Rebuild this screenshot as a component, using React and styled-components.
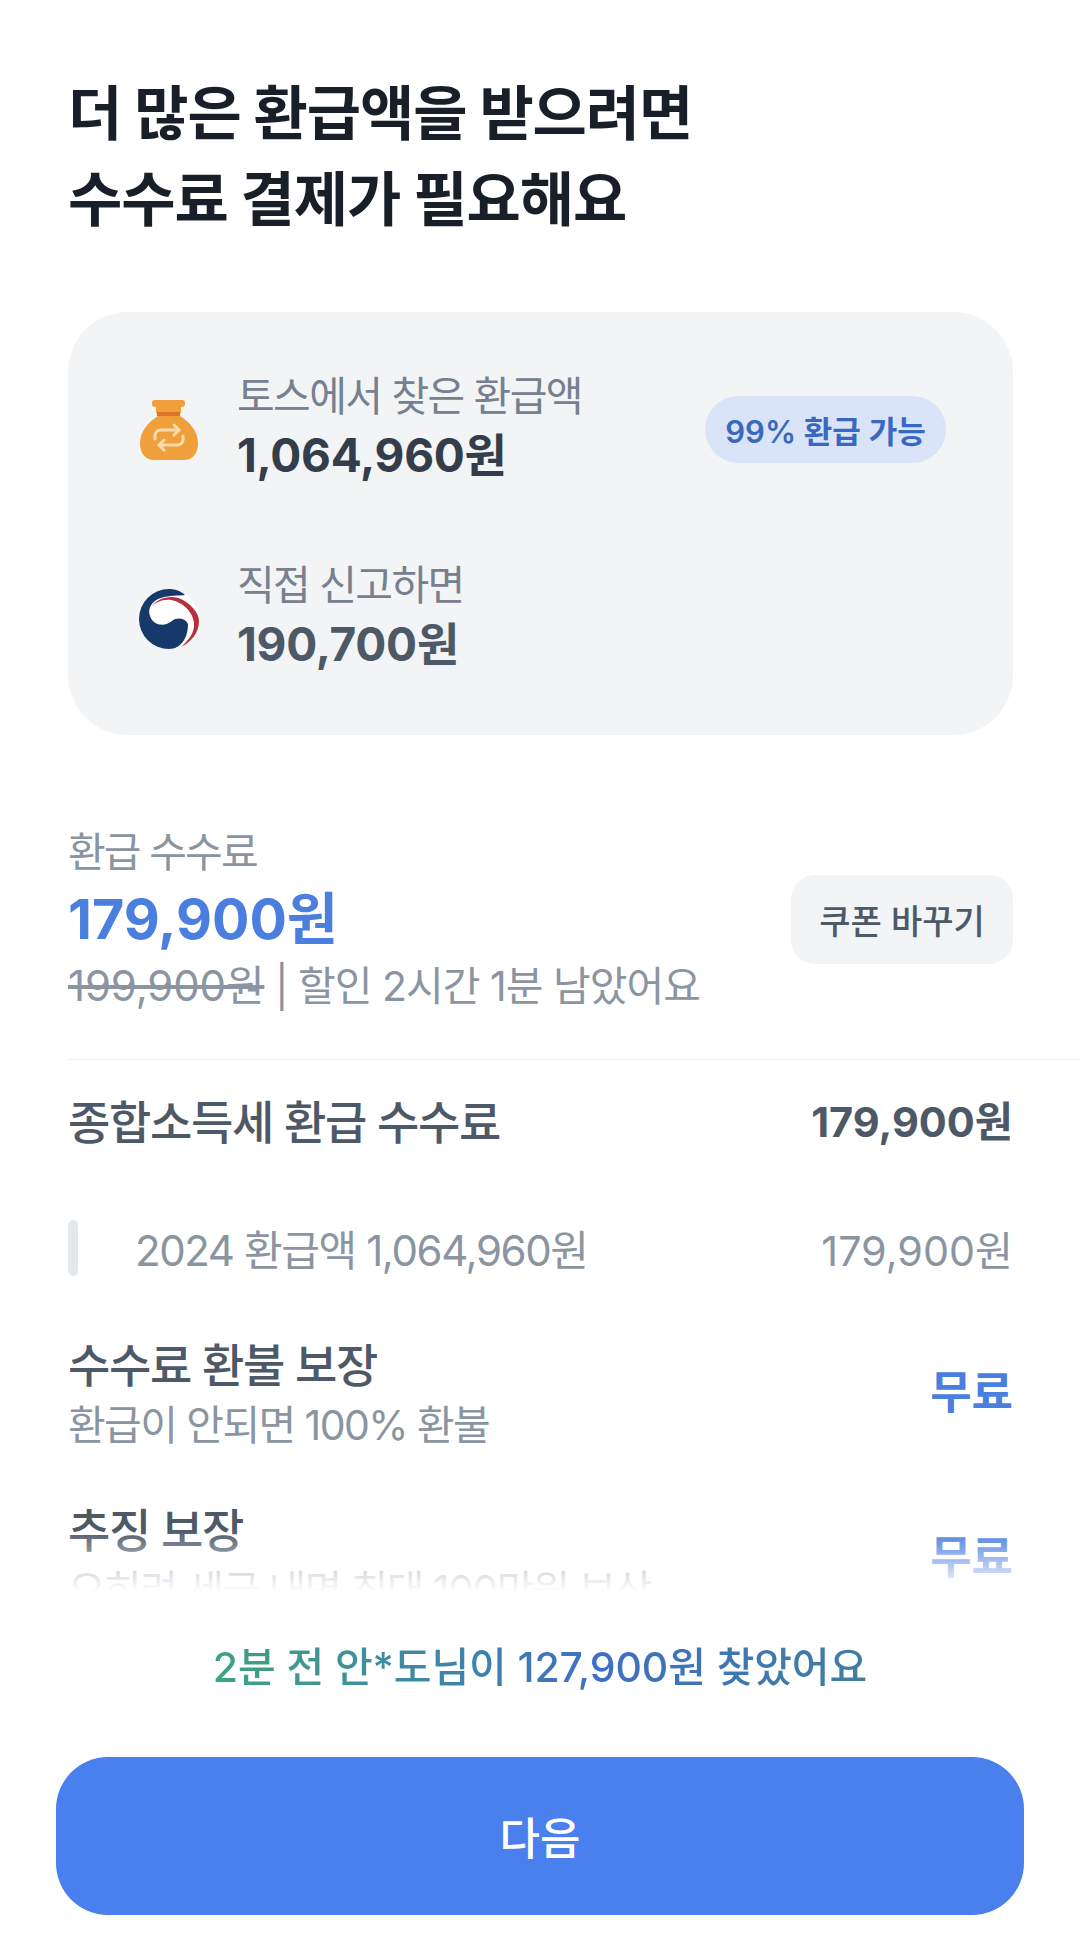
import React from "react";
import styled, { createGlobalStyle } from "styled-components";

const Global = createGlobalStyle`
  html, body { margin: 0; padding: 0; background: #fff; }
  * { box-sizing: border-box; }
  body { font-family: Inter, "Noto Sans CJK KR", sans-serif; }
`;
const Page = styled.div`
  width: 1080px; height: 1939px; display: flex; flex-direction: column; background: #fff; overflow: hidden;
`;
const Scroll = styled.main`
  position: relative; height: 1600px; overflow: hidden; padding: 71px 0 0 68px; flex: none;
`;
const Title = styled.h1`
  margin: 0 0 69px; font-size: 59px; line-height: 86px; font-weight: 700; color: #191f28; letter-spacing: -1.05px;
`;
const Card = styled.section`
  width: 945px; height: 423px; margin-bottom: 92px; background: #f2f4f6; border-radius: 60px;
  padding: 56px 67px 0 71px; display: flex; flex-direction: column; gap: 71px;
`;
const CardRow = styled.div`
  display: flex; align-items: center; height: 118px;
`;
const IconSlot = styled.div`
  width: 60px; height: 64px; margin: 6px 38px 0 0; flex: none; display: flex; align-items: center; justify-content: center;
`;
const CardText = styled.div`
  flex: 1; display: flex; flex-direction: column;
`;
const CardLabel = styled.div`
  font-size: 41px; line-height: 56px; color: #76808e; letter-spacing: -1.6px;
`;
const CardValue = styled.div`
  font-size: 46px; line-height: 62px; font-weight: 700; color: ${p => p.$c}; letter-spacing: -0.25px;
`;
const Badge = styled.div`
  height: 67px; width: 241px; margin-top: 5px; border-radius: 34px; background: #d9e4f8; color: #3a68bf;
  display: flex; align-items: center; justify-content: center; font-size: 31px; font-weight: 600;
`;
const Fee = styled.section`
  width: 945px; display: flex; align-items: center; justify-content: space-between; padding-bottom: 48px;
`;
const FeeText = styled.div`display: flex; flex-direction: column;`;
const FeeLabel = styled.div`font-size: 41px; line-height: 50px; color: #8b95a1; letter-spacing: -1.9px;`;
const FeePrice = styled.div`font-size: 55.5px; line-height: 84px; font-weight: 700; color: #4a7fe0;`;
const FeeNote = styled.div`font-size: 41px; line-height: 50px; color: #8b95a1; letter-spacing: -1px;`;
const Strike = styled.span`text-decoration: line-through; color: #8b95a1; font-size: 42px; letter-spacing: -0.15px;`;
const CouponBtn = styled.button`
  width: 222px; height: 89px; border: 0; border-radius: 24px; background: #f2f4f6; color: #4e5968;
  font: 500 34px Inter, "Noto Sans CJK KR", sans-serif;
`;
const Divider = styled.hr`margin: 0; border: 0; height: 1px; background: #eceef1;`;
const Row = styled.div`
  width: 945px; margin-top: ${p => p.$mt}px; display: flex; align-items: center; justify-content: space-between;
`;
const RowTitle = styled.div`font-size: 46px; line-height: 62px; font-weight: 500; color: #4e5968; letter-spacing: -1.3px;`;
const RowAmount = styled.div`font-size: 41.5px; line-height: 62px; font-weight: 700; color: #4e5968;`;
const SubBar = styled.span`width: 10px; height: 56px; border-radius: 5px; background: #e5e8eb; margin-right: 57px;`;
const SubLeft = styled.div`display: flex; align-items: center; font-size: 42px; color: #8b95a1; letter-spacing: -1.4px;`;
const SubAmount = styled.div`font-size: 41.3px; color: #8b95a1;`;
const RowText = styled.div`display: flex; flex-direction: column;`;
const RowDesc = styled.div`font-size: 41px; line-height: 58px; color: #8b95a1; letter-spacing: -1.6px;`;
const Free = styled.div`font-size: 45px; font-weight: 700; color: #4a7fe0; margin-bottom: 10px;`;
const Fade = styled.div`
  position: absolute; left: 0; right: 0; bottom: 0; height: 70px;
  background: linear-gradient(to bottom, rgba(255,255,255,0), #fff 88%);
`;
const Notice = styled.div`
  margin-top: 42px; text-align: center; font-size: 41px; line-height: 50px; font-weight: 500; letter-spacing: -0.1px;
`;
const Gradient = styled.span`
  background: linear-gradient(90deg, #3fa37f 0%, #3f6fc4 60%, #3f7f9f 100%);
  -webkit-background-clip: text; background-clip: text; color: transparent;
`;
const Cta = styled.button`
  margin: 65px 56px 0; height: 158px; border: 0; border-radius: 52px; background: #4a80ee; color: #fff;
  font: 500 44px Inter, "Noto Sans CJK KR", sans-serif;
`;

const Bag = () => (
  <svg width="58" height="60" viewBox="0 0 58 60">
    <rect x="12" y="0" width="33" height="7" rx="3" fill="#f0a03a"/>
    <path d="M16 7h25v6H16z" fill="#f0a03a"/>
    <path d="M17 12h23v4H17z" fill="#dd7526"/>
    <path d="M18 16h22c10 6 18 16 18 27 0 11-6 17-14 17H14C6 60 0 54 0 43c0-11 8-21 18-27z" fill="#f0a03a"/>
    <g fill="none" stroke="#f9dcae" strokeWidth="3" strokeLinecap="round" strokeLinejoin="round">
      <path d="M15 39v-4c0-3 3-5 6-5h18"/>
      <path d="M34 25l5 5-5 5"/>
      <path d="M43 36v4c0 3-3 5-6 5H19"/>
      <path d="M24 40l-5 5 5 5"/>
    </g>
  </svg>
);
const Taegeuk = () => (
  <svg width="60" height="62" viewBox="0 0 60 62">
    <circle cx="30" cy="31" r="30" fill="#fff"/>
    <path d="M30 1A30 30 0 0 0 30 61C42 61 49 50 49 36C46 30 38 29 33 33C26 39 14 38 11 28C8 20 14 12 22 10C30 7 40 8 46 7C42 3 36 1 30 1Z" fill="#17386b"/>
    <path d="M12 20C18 9 34 6 44 12C54 18 60 26 60 33C60 45 52 54 42 59C50 52 56 44 55 35C54 24 44 14 32 12C24 11 16 14 12 20Z" fill="#b4303f"/>
  </svg>
);

export default function App() {
  return (
    <Page>
      <Global />
      <Scroll>
        <Title>더 많은 환급액을 받으려면<br />수수료 결제가 필요해요</Title>
        <Card>
          <CardRow>
            <IconSlot><Bag /></IconSlot>
            <CardText>
              <CardLabel>토스에서 찾은 환급액</CardLabel>
              <CardValue $c="#333d4b">1,064,960원</CardValue>
            </CardText>
            <Badge>99% 환급 가능</Badge>
          </CardRow>
          <CardRow>
            <IconSlot><Taegeuk /></IconSlot>
            <CardText>
              <CardLabel>직접 신고하면</CardLabel>
              <CardValue $c="#4e5968">190,700원</CardValue>
            </CardText>
          </CardRow>
        </Card>
        <Fee>
          <FeeText>
            <FeeLabel>환급 수수료</FeeLabel>
            <FeePrice>179,900원</FeePrice>
            <FeeNote><Strike>199,900원</Strike> | 할인 2시간 1분 남았어요</FeeNote>
          </FeeText>
          <CouponBtn>쿠폰 바꾸기</CouponBtn>
        </Fee>
        <Divider />
        <Row $mt={31}>
          <RowTitle>종합소득세 환급 수수료</RowTitle>
          <RowAmount>179,900원</RowAmount>
        </Row>
        <Row $mt={64}>
          <SubLeft><SubBar />2024 환급액 1,064,960원</SubLeft>
          <SubAmount>179,900원</SubAmount>
        </Row>
        <Row $mt={56}>
          <RowText>
            <RowTitle>수수료 환불 보장</RowTitle>
            <RowDesc>환급이 안되면 100% 환불</RowDesc>
          </RowText>
          <Free>무료</Free>
        </Row>
        <Row $mt={45}>
          <RowText>
            <RowTitle>추징 보장</RowTitle>
            <RowDesc>오히려 세금 내면 최대 100만원 보상</RowDesc>
          </RowText>
          <Free>무료</Free>
        </Row>
        <Fade />
      </Scroll>
      <Notice><Gradient>2분 전 안*도님이 127,900원 찾았어요</Gradient></Notice>
      <Cta>다음</Cta>
    </Page>
  );
}
